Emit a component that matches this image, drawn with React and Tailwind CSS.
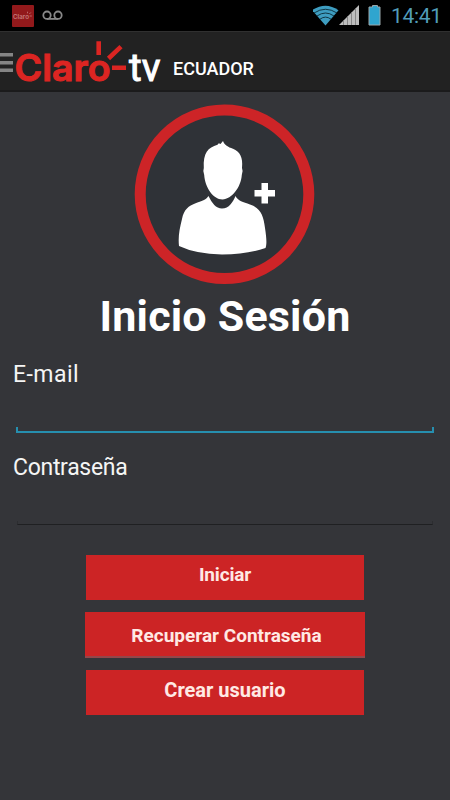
import React from "react";

function StatusBar() {
  return (
    <div className="flex h-[31px] items-start bg-black">
      <svg className="h-[31px] w-[75px]" viewBox="0 0 75 31">
        <rect x="12" y="5" width="22" height="22" rx="1" fill="#92191b" />
        <text x="13" y="18.5" fontSize="6" fontWeight="600" textLength="16" lengthAdjust="spacingAndGlyphs" fill="#c47b7c" fontFamily="Inter, sans-serif">Claro</text>
        <path d="M27.5 13.3v-1.6M29.3 14l1.5-1.5M29.6 16h2.2" stroke="#c47b7c" strokeWidth=".8" />
        <g fill="none" stroke="#888" strokeWidth="1.8">
          <circle cx="47" cy="15.2" r="3.7" />
          <circle cx="58" cy="15.2" r="3.7" />
          <path d="M47 18.9h11" />
        </g>
      </svg>
      <div className="flex-1" />
      <svg className="h-[31px] w-[76px]" viewBox="0 0 76 31">
        <path d="M-1 10.2Q12.5 1.2 25.5 10.2L12.5 25.5Z" fill="#3e9dc0" />
        <g fill="none" stroke="#0a2a36" strokeWidth=".9">
          <path d="M1 13Q12.5 5.5 24 13" />
          <path d="M4 16Q12.5 10 21 16" />
          <path d="M7 19.2Q12.5 15 18 19.2" />
        </g>
        <path d="M26 25L46 5v20Z" fill="#bdbdbd" />
        <path d="M30.5 20v5M34.5 16v9M38.5 12v13M42.5 8v17" stroke="#777" strokeWidth=".8" />
        <path d="M59.5 5.5h5v1.5h2.5V25h-11V7h3.5z" fill="#2fa5cf" stroke="#9aa7ab" strokeWidth="1" />
      </svg>
      <div className="w-[61px] pl-[2px] pt-[4px] text-[21px] leading-[25px] tracking-[-0.3px] whitespace-nowrap text-[#519db9]">14:41</div>
    </div>
  );
}

function Header() {
  return (
    <header className="flex h-[61px] border-t border-b-2 border-t-[#303030] border-b-[#1b1b1c] bg-[#222222]">
      <svg className="h-[58px] w-[173px] shrink-0" viewBox="0 32 173 58">
        <path d="M0 54.7h13M0 62.7h13M0 70.3h13" stroke="#858585" strokeWidth="3.4" />
        <text x="14.5" y="80.5" fontSize="37" fontWeight="600" textLength="96" lengthAdjust="spacingAndGlyphs" fill="#dc2522" stroke="#dc2522" strokeWidth="1" fontFamily="Inter, sans-serif">Claro</text>
        <path d="M98.7 41.2V55M108.5 58.5L121 46.7M112 67.7h14" fill="none" stroke="#dc2522" strokeWidth="4.6" />
        <text x="129" y="81" fontSize="38" fontWeight="400" textLength="31.5" lengthAdjust="spacingAndGlyphs" fill="#fff" stroke="#fff" strokeWidth=".9" fontFamily="Roboto, sans-serif">tv</text>
      </svg>
      <h2 className="pt-[25px] text-[18px] leading-[24px] font-medium whitespace-nowrap text-white">ECUADOR</h2>
    </header>
  );
}

function Avatar() {
  return (
    <svg className="mx-auto mt-[12px] block h-[182px] w-[182px]" viewBox="134 104 182 182">
      <circle cx="224.5" cy="194.3" r="84.3" fill="#2f3237" stroke="#cd2427" strokeWidth="11" />
      <path
        d="M223 141L220.5 144L218.8 143.2L217.5 144.8C208 147.5 203 153 203.8 168Q202.6 171 204.2 175C205 187 213 199.5 222.5 199.5C232 199 241 187 241.8 175Q243.4 171 242 168C243 157 240 152 233 148.8C228 147 224.5 145 223 141Z"
        fill="#fff"
      />
      <path
        d="M208.5 196C212 203 216 208.5 222 208.5C229 208.5 233 202 235.5 196C238 201 243 202 250 204.5C261 208 263.5 216 265 228C266.5 238 267 244 265.5 248Q247 254.5 222 254.5Q196 254 179 246C178 237 179.5 229 182 219C184 209 189 206 195 203.5C202 201 206 200 208.5 196Z"
        fill="#fff"
      />
      <path d="M261.5 183h6.5v7h7v6.5h-7v7h-6.5v-7h-7V190h7z" fill="#fff" />
    </svg>
  );
}

function EmailField() {
  return (
    <div className="h-[93px] px-[13px]">
      <label className="block h-[68px] text-[23px] leading-[31px] tracking-[0.45px] text-[#f5f5f5]" htmlFor="email">E-mail</label>
      <div id="email" className="mx-[3px] h-[6px] border-x-2 border-b-2 border-[#268faf]" />
    </div>
  );
}

function PasswordField() {
  return (
    <div className="h-[103px] px-[13px]">
      <label className="block h-[69px] text-[23px] leading-[31px] tracking-[-0.3px] text-[#f5f5f5]" htmlFor="password">Contraseña</label>
      <div id="password" className="mx-[4px] h-[4px] border-x border-b border-x-[#2c2d30] border-b-[#1f2022]" />
    </div>
  );
}

export default function App() {
  return (
    <div className="flex h-[800px] w-[450px] flex-col overflow-hidden bg-[#343539] font-['Roboto',sans-serif]">
      <StatusBar />
      <Header />
      <main className="flex flex-col">
        <Avatar />
        <h1 className="mt-[4px] h-[69px] text-center text-[43px] leading-[52px] font-bold tracking-[0.2px] whitespace-nowrap text-white">Inicio Sesión</h1>
        <EmailField />
        <PasswordField />
        <div className="flex flex-col items-center gap-[12px] font-bold text-[#ffe9e4]">
          <button className="h-[45px] w-[278px] bg-[#cc2425] pb-[5px] text-[19px] tracking-[-0.15px]">Iniciar</button>
          <button className="h-[46px] w-[280px] border-b-2 border-[#94464a] bg-[#cc2425] pt-[4px] pl-[3px] text-[19px]">Recuperar Contraseña</button>
          <button className="h-[45px] w-[278px] bg-[#cc2425] pb-[5px] text-[20px]">Crear usuario</button>
        </div>
      </main>
    </div>
  );
}
